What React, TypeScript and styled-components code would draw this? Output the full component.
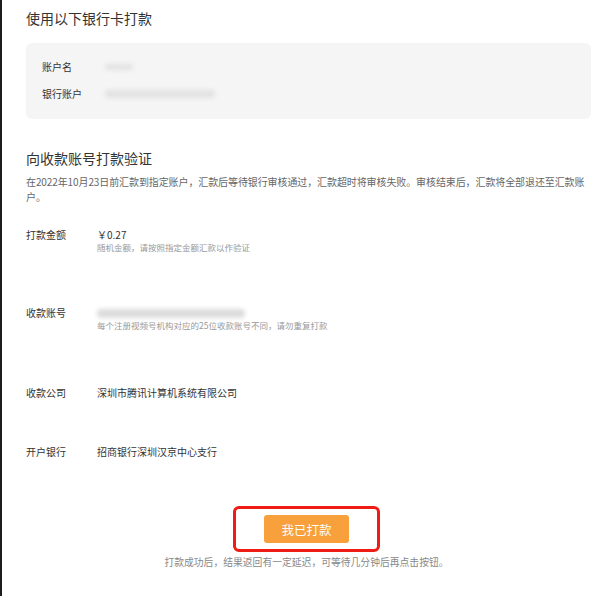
import React from 'react';
import styled, { createGlobalStyle } from 'styled-components';

const GlobalStyle = createGlobalStyle`
  html, body {
    margin: 0;
    padding: 0;
    background: #ffffff;
  }
  body {
    font-family: "Noto Sans CJK SC", "Noto Sans", "Liberation Sans", sans-serif;
    color: #333333;
  }
`;

const Page = styled.div`
  box-sizing: border-box;
  min-height: 596px;
  width: 616px;
  border-left: 2px solid #1c1c1c;
  padding: 8px 25px 0 24px;
  display: flex;
  flex-direction: column;
`;

const SectionTitle = styled.h2<{ $top?: number }>`
  margin: ${({ $top }) => $top ?? 0}px 0 0;
  font-size: 14px;
  line-height: 20px;
  font-weight: 400;
  color: #333333;
`;

const CardPanel = styled.div`
  margin-top: 15px;
  height: 76px;
  box-sizing: border-box;
  padding: 17px 16px 0;
  background: #f5f5f5;
  border-radius: 6px;
  display: flex;
  flex-direction: column;
  gap: 13px;
`;

const CardRow = styled.div`
  display: flex;
  align-items: center;
  height: 14px;
`;

const CardLabel = styled.span`
  width: 63px;
  font-size: 10px;
  line-height: 14px;
  color: #333333;
`;

const Blurred = styled.span<{ $w: number; $h?: number; $tone?: string }>`
  display: inline-block;
  width: ${({ $w }) => $w}px;
  height: ${({ $h }) => $h ?? 7}px;
  border-radius: 4px;
  background: ${({ $tone }) => $tone ?? '#e2e2e2'};
  filter: blur(2.2px);
`;

const Description = styled.p`
  margin: 6px 0 0;
  font-size: 10px;
  line-height: 15px;
  color: #666666;
  letter-spacing: -0.1px;
`;

const FieldRow = styled.div<{ $top: number }>`
  margin-top: ${({ $top }) => $top}px;
  display: flex;
  align-items: flex-start;
`;

const FieldLabel = styled.span`
  width: 70px;
  flex-shrink: 0;
  font-size: 10px;
  line-height: 14px;
  color: #333333;
`;

const FieldBody = styled.div`
  display: flex;
  flex-direction: column;
  padding-left: 1px;
`;

const FieldValue = styled.div`
  height: 14px;
  display: flex;
  align-items: center;
  font-size: 10px;
  line-height: 14px;
  color: #333333;
`;

const FieldHint = styled.div`
  font-size: 8.5px;
  line-height: 10px;
  color: #999999;
`;

const Footer = styled.div`
  margin-top: 47px;
  display: flex;
  flex-direction: column;
  align-items: center;
`;

const Highlight = styled.div`
  box-sizing: border-box;
  width: 147px;
  height: 46px;
  margin-left: -4px;
  border: 3px solid #ee1c14;
  border-radius: 6px;
  display: flex;
  align-items: center;
  justify-content: center;
`;

const PayButton = styled.button`
  width: 85px;
  height: 28px;
  border: none;
  border-radius: 3px;
  background: #f8a03b;
  color: #ffffff;
  font-family: inherit;
  font-size: 12.5px;
  cursor: pointer;
  padding: 0;
`;

const FooterNote = styled.p`
  margin: 3px 0 0;
  margin-left: -4px;
  font-size: 9.8px;
  line-height: 14px;
  color: #888888;
`;

interface Field {
  label: string;
  value: React.ReactNode;
  hint?: string;
  top: number;
}

const fields: Field[] = [
  { label: '打款金额', value: '￥0.27', hint: '随机金额，请按照指定金额汇款以作验证', top: 24 },
  {
    label: '收款账号',
    value: <Blurred $w={148} $h={9} $tone="#dcdcdc" />,
    hint: '每个注册视频号机构对应的25位收款账号不同，请勿重复打款',
    top: 54,
  },
  { label: '收款公司', value: '深圳市腾讯计算机系统有限公司', top: 56 },
  { label: '开户银行', value: '招商银行深圳汉京中心支行', top: 45 },
];

export default function App() {
  return (
    <>
      <GlobalStyle />
      <Page>
        <SectionTitle>使用以下银行卡打款</SectionTitle>
        <CardPanel>
          <CardRow>
            <CardLabel>账户名</CardLabel>
            <Blurred $w={28} $h={6} />
          </CardRow>
          <CardRow>
            <CardLabel>银行账户</CardLabel>
            <Blurred $w={110} $h={8} />
          </CardRow>
        </CardPanel>

        <SectionTitle $top={29}>向收款账号打款验证</SectionTitle>
        <Description>
          在2022年10月23日前汇款到指定账户，汇款后等待银行审核通过，汇款超时将审核失败。审核结束后，汇款将全部退还至汇款账户。
        </Description>

        {fields.map((f) => (
          <FieldRow key={f.label} $top={f.top}>
            <FieldLabel>{f.label}</FieldLabel>
            <FieldBody>
              <FieldValue>{f.value}</FieldValue>
              {f.hint && <FieldHint>{f.hint}</FieldHint>}
            </FieldBody>
          </FieldRow>
        ))}

        <Footer>
          <Highlight>
            <PayButton>我已打款</PayButton>
          </Highlight>
          <FooterNote>打款成功后，结果返回有一定延迟，可等待几分钟后再点击按钮。</FooterNote>
        </Footer>
      </Page>
    </>
  );
}
